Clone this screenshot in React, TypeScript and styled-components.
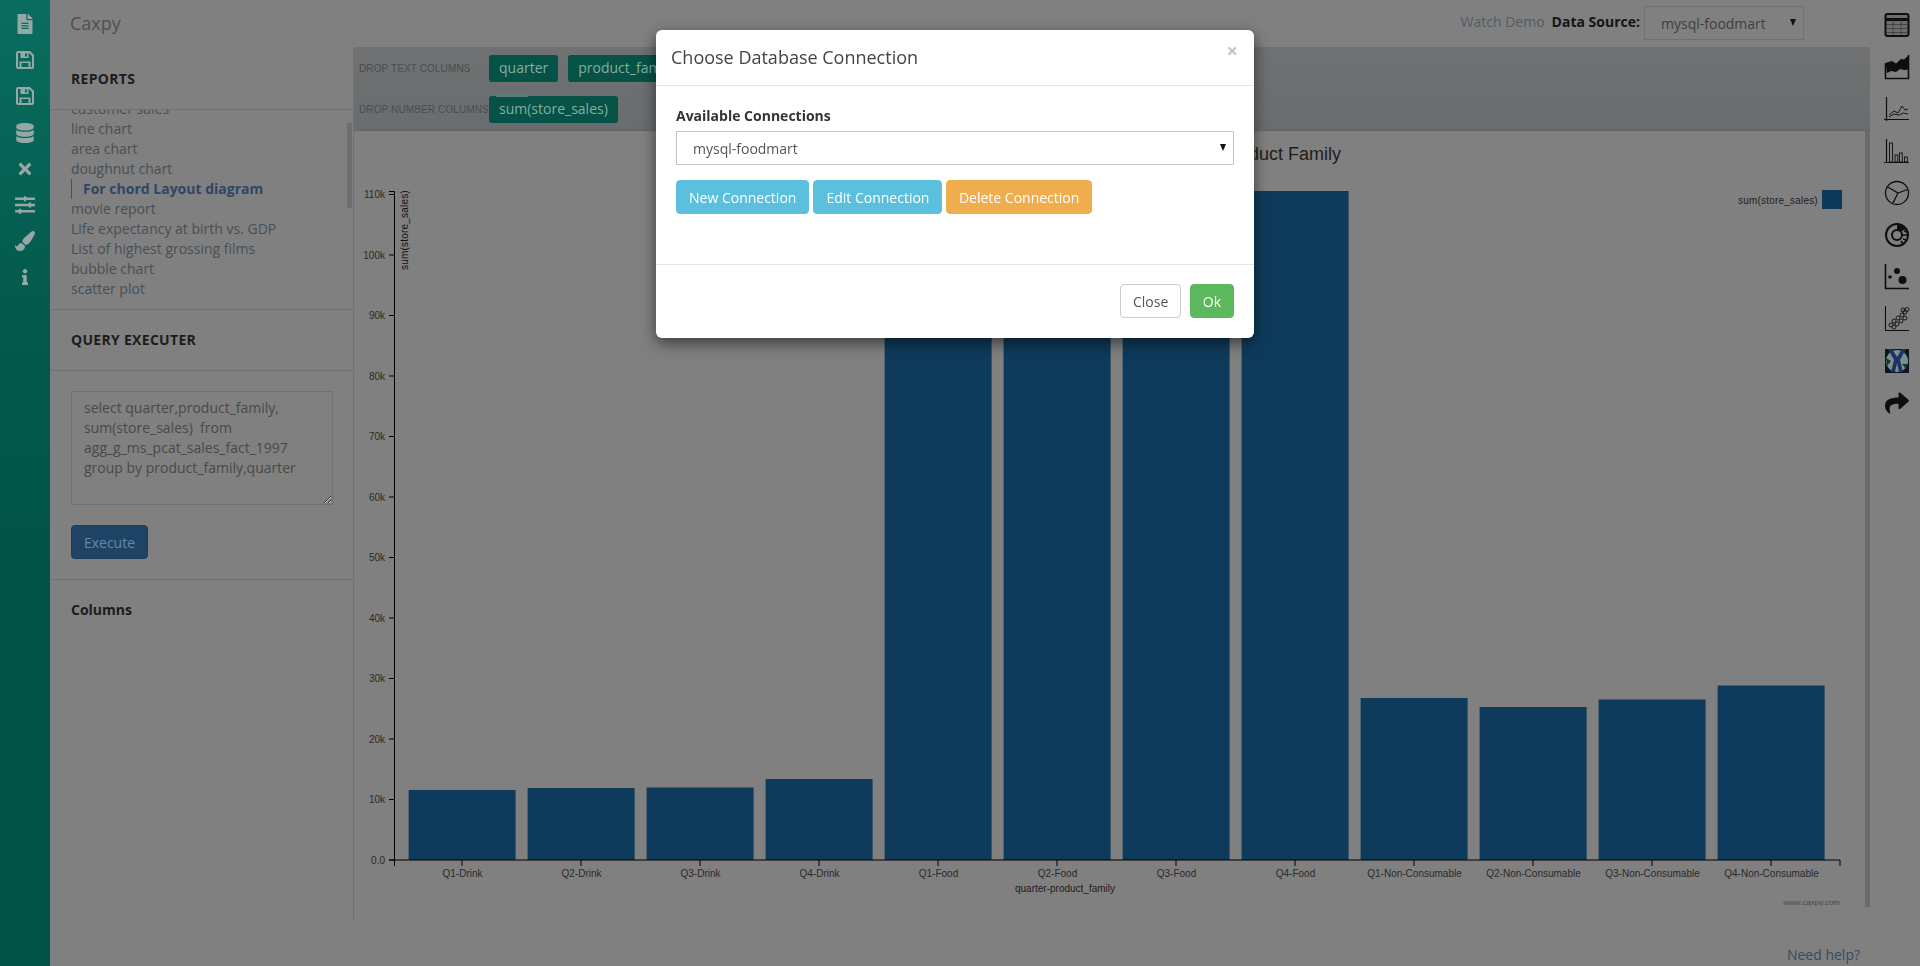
import React from 'react';
import styled, { createGlobalStyle } from 'styled-components';
import { FaFileAlt, FaDatabase, FaTimes, FaSlidersH, FaPaintBrush, FaInfo, FaShare } from 'react-icons/fa';

const Global = createGlobalStyle`
  html, body { margin: 0; padding: 0; background: #808080; overflow: hidden; }
  body { font-family: "Open Sans", "Liberation Sans", sans-serif; font-size: 14px; color: #4c4f52; }
  * { box-sizing: border-box; }
`;

const Page = styled.div`
  display: flex;
  width: 1920px;
  height: 966px;
  background: #808080;
`;

const LeftRail = styled.nav`
  width: 50px;
  flex: none;
  padding-top: 6px;
  display: flex;
  flex-direction: column;
  align-items: center;
  background: linear-gradient(180deg, #096d5f 0, #045a4d 300px, #005146 620px);
`;

const RailIcon = styled.div`
  width: 50px;
  height: 36.2px;
  flex: none;
  display: flex;
  align-items: center;
  justify-content: center;
  color: #96a8a5;
  font-size: ${(p: { $size?: number }) => p.$size ?? 20}px;
`;

const Center = styled.div`
  flex: 1;
  min-width: 0;
  display: flex;
  flex-direction: column;
`;

const TopBar = styled.header`
  height: 47px;
  flex: none;
  display: flex;
  align-items: center;
  justify-content: space-between;
  padding: 0 66px 0 20px;
`;

const Brand = styled.div`
  font-size: 18px;
  line-height: 24px;
  margin-top: -2px;
  color: #4f5051;
`;

const TopRight = styled.div`
  display: flex;
  align-items: center;
  padding-bottom: 1px;
`;

const DemoLink = styled.a`
  color: #525c68;
  font-size: 14px;
  margin-right: 7px;
  margin-top: -3px;
`;

const SourceLabel = styled.span`
  color: #141414;
  font-weight: 700;
  font-size: 14px;
  margin-right: 4px;
  margin-top: -3px;
`;

const FakeSelect = styled.div`
  position: relative;
  height: 34px;
  width: ${(p: { $light?: boolean }) => (p.$light ? '100%' : '160px')};
  padding: 7px 16px;
  line-height: 20px;
  border: 1px solid ${(p: { $light?: boolean }) => (p.$light ? '#c4c4c4' : '#707070')};
  color: ${(p: { $light?: boolean }) => (p.$light ? '#555' : '#3f3f3f')};
  background: ${(p: { $light?: boolean }) => (p.$light ? '#fff' : '#808080')};
  &::after {
    content: '';
    position: absolute;
    right: 7px;
    top: 12px;
    border-left: 3.5px solid transparent;
    border-right: 3.5px solid transparent;
    border-top: 7px solid #111;
  }
`;

const Body = styled.div`
  height: 873px;
  flex: none;
  display: flex;
  align-items: flex-start;
`;

const Sidebar = styled.aside`
  width: 304px;
  flex: none;
  height: 871px;
  margin-top: 2px;
  padding-left: 1px;
  border-right: 1px solid #727272;
  background: #808080;
  display: flex;
  flex-direction: column;
`;

const SectionHead = styled.h3`
  height: 61px;
  margin: 0;
  flex: none;
  padding: 0 20px 2px;
  display: flex;
  align-items: center;
  font-size: 14px;
  font-weight: 700;
  letter-spacing: ${(p: { $caps?: boolean; $plain?: boolean }) => (p.$caps ? '0.3px' : '0')};
  color: #1c1c1c;
  border-bottom: ${(p: { $caps?: boolean; $plain?: boolean }) => (p.$plain ? 'none' : '1px solid #717171')};
`;

const ListWrap = styled.div`
  position: relative;
  height: 200px;
  flex: none;
  overflow: hidden;
  padding: 0 20px;
  border-bottom: 1px solid #717171;
`;

const ReportList = styled.ul`
  list-style: none;
  margin: -11px 0 0;
  padding: 0;
`;

const ReportItem = styled.li`
  height: 20px;
  line-height: 20px;
  white-space: nowrap;
  color: ${(p: { $active?: boolean }) => (p.$active ? '#2f4664' : '#484f56')};
  font-weight: ${(p: { $active?: boolean }) => (p.$active ? 700 : 400)};
  ${(p: { $active?: boolean }) => (p.$active ? 'border-left: 1px solid #4a4f55; padding-left: 11px;' : '')}
`;

const ScrollThumb = styled.div`
  position: absolute;
  right: 1px;
  top: 13px;
  width: 5px;
  height: 85px;
  background: #6f6f6f;
`;

const QueryBody = styled.div`
  flex: none;
  padding: 20px;
  border-bottom: 1px solid #717171;
`;

const QueryBox = styled.textarea`
  display: block;
  width: 262px;
  height: 114px;
  padding: 6px 12px;
  border: 1px solid #717171;
  border-radius: 1px;
  background: #808080;
  color: #494949;
  font: 14px/20px "Open Sans", "Liberation Sans", sans-serif;
  outline: none;
`;

const ExecuteButton = styled.button`
  display: block;
  margin-top: 20px;
  width: 77px;
  height: 34px;
  padding: 0;
  border: 1px solid #1b3b58;
  border-radius: 4px;
  background: #1f4365;
  color: #6288a8;
  font: 14px "Open Sans", "Liberation Sans", sans-serif;
`;

const Main = styled.main`
  flex: 1;
  min-width: 0;
  height: 859px;
  display: flex;
  flex-direction: column;
`;

const DropZone = styled.div`
  height: 84px;
  flex: none;
  padding: 8px 0 0 5px;
  display: flex;
  flex-direction: column;
  gap: 14px;
  background: linear-gradient(180deg, #6f7172, #6a6d6f);
  border-bottom: 1px solid #626465;
`;

const DropRow = styled.div`
  display: flex;
  align-items: center;
  height: 27px;
`;

const DropLabel = styled.span`
  width: 130px;
  flex: none;
  font: 10px "Liberation Sans", Arial, sans-serif;
  letter-spacing: 0.12px;
  color: #4a4d4f;
  text-transform: uppercase;
`;

const Chip = styled.span`
  position: relative;
  height: 27px;
  padding: 0 10px;
  margin-right: 10px;
  line-height: 26px;
  border-radius: 3px;
  background: #065246;
  color: #85aea4;
  font-size: 14px;
  white-space: nowrap;
`;

const ChipGhost = styled.i`
  position: absolute;
  left: 7px;
  top: -3px;
  width: 32px;
  height: 4px;
  border-radius: 2px 2px 0 0;
  background: #5c7d77;
`;

const ChartPane = styled.div`
  height: 776px;
  flex: none;
  background: #808080;
  border-right: 5px solid #6a6a6a;
  overflow: hidden;
`;

const ChartSvg = styled.svg`
  display: block;
  width: 1511px;
  height: 775px;
  font-family: "Liberation Sans", Arial, sans-serif;
`;

const Footer = styled.footer`
  flex: 1;
  display: flex;
  justify-content: flex-end;
  align-items: flex-start;
  padding: 25px 10px 0 0;
`;

const HelpLink = styled.a`
  color: #384a5e;
  font-size: 14px;
  line-height: 20px;
`;

const RightRail = styled.aside`
  width: 50px;
  flex: none;
  padding-top: 4px;
  display: flex;
  flex-direction: column;
  background: #808080;
`;

const ChartIcon = styled.div`
  height: 42px;
  flex: none;
  display: flex;
  align-items: center;
  justify-content: center;
  padding-left: 4px;
  color: #0e0e0e;
`;

const Modal = styled.div`
  position: fixed;
  left: 656px;
  top: 30px;
  width: 598px;
  height: 308px;
  background: #fff;
  border-radius: 6px;
  box-shadow: 0 5px 15px rgba(0, 0, 0, 0.55);
  display: flex;
  flex-direction: column;
  z-index: 10;
`;

const ModalHeader = styled.div`
  height: 56px;
  flex: none;
  display: flex;
  align-items: center;
  justify-content: space-between;
  padding: 0 15px 2px 15px;
  border-bottom: 1px solid #e5e5e5;
`;

const ModalTitle = styled.h4`
  margin: 0;
  font-size: 18px;
  font-weight: 400;
  color: #444;
`;

const CloseX = styled.span`
  margin: -12px 0 0;
  padding-right: 1px;
  font-size: 20px;
  font-weight: 700;
  line-height: 1;
  color: #c4c4c4;
`;

const ModalBody = styled.div`
  height: 179px;
  flex: none;
  padding: 20px 20px 0;
  border-bottom: 1px solid #e5e5e5;
`;

const FieldLabel = styled.label`
  display: block;
  height: 20px;
  line-height: 20px;
  margin-bottom: 5px;
  font-size: 14px;
  font-weight: 700;
  color: #333;
`;

const ButtonRow = styled.div`
  display: flex;
  gap: 4px;
  margin-top: 15px;
`;

const Btn = styled.button`
  height: 34px;
  padding: 0 ${(p: { $kind: string }) => (p.$kind === 'info' || p.$kind === 'success' ? '12px' : '11.5px')};
  border: 1px solid
    ${(p: { $kind: string }) =>
      ({ info: '#5bbfdd', warning: '#f0ad4e', success: '#5cb85c', default: '#ccc' } as Record<string, string>)[p.$kind]};
  border-radius: 4px;
  background: ${(p: { $kind: string }) =>
    ({ info: '#5bc0de', warning: '#f0ad4e', success: '#5cb85c', default: '#fff' } as Record<string, string>)[p.$kind]};
  color: ${(p: { $kind: string }) => (p.$kind === 'default' ? '#555' : '#fff')};
  font: 14px "Open Sans", "Liberation Sans", sans-serif;
  white-space: nowrap;
`;

const ModalFooter = styled.div`
  flex: 1;
  display: flex;
  justify-content: flex-end;
  gap: 9px;
  padding: 19px 20px 0;
`;

const reports = [
  'customer sales',
  'line chart',
  'area chart',
  'doughnut chart',
  'For chord Layout diagram',
  'movie report',
  'Life expectancy at birth vs. GDP',
  'List of highest grossing films',
  'bubble chart',
  'scatter plot',
];

const bars = [
  { label: 'Q1-Drink', top: 790 },
  { label: 'Q2-Drink', top: 788 },
  { label: 'Q3-Drink', top: 787.5 },
  { label: 'Q4-Drink', top: 779 },
  { label: 'Q1-Food', top: 230 },
  { label: 'Q2-Food', top: 226 },
  { label: 'Q3-Food', top: 228 },
  { label: 'Q4-Food', top: 191 },
  { label: 'Q1-Non-Consumable', top: 698 },
  { label: 'Q2-Non-Consumable', top: 707 },
  { label: 'Q3-Non-Consumable', top: 699.5 },
  { label: 'Q4-Non-Consumable', top: 685.5 },
];

const yTicks = ['0.0', '10k', '20k', '30k', '40k', '50k', '60k', '70k', '80k', '90k', '100k', '110k'];

const Chart = () => (
  <ChartSvg viewBox="354 131 1511 775">
    <text x="1341" y="160" textAnchor="end" fontSize="18" fill="#1d1d1d">Sum of Sales by Quarter Product Family</text>
    {bars.map((b, i) => (
      <rect key={b.label} x={408.6 + 119 * i} y={b.top} width={107} height={860 - b.top} fill="#0e3b5c" />
    ))}
    <path d="M389 191.5H394.5V860H389M394.5 866V860H1840V866" fill="none" stroke="#000" />
    {yTicks.map((t, i) => {
      const y = 860 - 60.5 * i;
      return (
        <g key={t}>
          <line x1="389" x2="394.5" y1={y} y2={y} stroke="#000" />
          <text x="385" y={y + 3.5} textAnchor="end" fontSize="10" fill="#2a2a2a">{t}</text>
        </g>
      );
    })}
    {bars.map((b, i) => {
      const cx = 462 + 119 * i;
      return (
        <g key={b.label}>
          <line x1={cx} x2={cx} y1="860" y2="866" stroke="#000" />
          <text x={cx + 0.5} y="876.5" textAnchor="middle" fontSize="10" fill="#2a2a2a">{b.label}</text>
        </g>
      );
    })}
    <text x="1065" y="892" textAnchor="middle" fontSize="10" fill="#1d1d1d">quarter-product_family</text>
    <text transform="translate(408 270) rotate(-90)" fontSize="10" letterSpacing="0.2" fill="#111">sum(store_sales)</text>
    <text x="1738" y="204" fontSize="10" letterSpacing="0.2" fill="#222">sum(store_sales)</text>
    <rect x="1822" y="190" width="20" height="19" fill="#0d3a5a" />
    <text x="1840" y="905" textAnchor="end" fontSize="8" fill="#4a4a4a">www.caxpy.com</text>
  </ChartSvg>
);

const Svg = ({ children }: { children: React.ReactNode }) => (
  <svg width="26" height="26" viewBox="0 0 26 26" fill="none" stroke="currentColor">{children}</svg>
);

const FloppyIcon = () => (
  <svg width="18" height="18" viewBox="0 0 18 18">
    <path
      fillRule="evenodd"
      fill="currentColor"
      d="M2 0h12l4 4v12a2 2 0 0 1-2 2H2a2 2 0 0 1-2-2V2a2 2 0 0 1 2-2zM2 2v14h1.5v-5.5h11V16H16V5l-3-3h-.5v5h-8V2zM5.5 12v4h7v-4zM9 2.5v3h2v-3z"
    />
  </svg>
);

const chartIcons: React.ReactNode[] = [
  <Svg key="table">
    <rect x="1.5" y="2" width="23" height="22" rx="2" fill="#6e6e6e" stroke="#0e0e0e" strokeWidth="2" />
    <path d="M1 7.5H25" stroke="#0e0e0e" strokeWidth="3" />
    <path d="M2 12.5H24M2 16.5H24M2 20.5H24M9 8V23M17 8V23" stroke="#3a3a3a" strokeWidth="0.8" />
  </Svg>,
  <Svg key="area">
    <path d="M1.5 9 8 7l4 2.5 5-4.5 3 .5 4.5-4v14l-4.5 .5-4-1-4 3-5-1-4 2z" fill="#0e0e0e" stroke="none" />
    <path d="M1.5 9v15.5h23V1" strokeWidth="1.6" />
  </Svg>,
  <Svg key="line">
    <path d="M2.5 1v24M0 23.5h25" strokeWidth="1.2" />
    <path d="M5 19l5-4 4 2 4-7 3 4 3-1M5 21l5-3 5 1 4-2 5 1" strokeWidth="0.9" />
  </Svg>,
  <Svg key="bar">
    <path d="M2.5 1v24M0 24.5h25" strokeWidth="1.2" />
    <rect x="5.5" y="5" width="3" height="19" strokeWidth="0.9" />
    <rect x="11" y="17" width="2.8" height="7" strokeWidth="0.9" />
    <rect x="15.5" y="15" width="2.8" height="9" strokeWidth="0.9" />
    <rect x="20.5" y="19" width="2.8" height="5" strokeWidth="0.9" />
  </Svg>,
  <Svg key="pie">
    <circle cx="13" cy="13" r="11.5" strokeWidth="1.3" />
    <path d="M3 6.5l11 6.5 9.5-3.5M14 13l-5 10" strokeWidth="1.3" />
  </Svg>,
  <Svg key="donut">
    <circle cx="13" cy="13" r="11" strokeWidth="2" />
    <circle cx="13" cy="13" r="5" strokeWidth="2" />
    <path d="M13 2a11 11 0 0 1 9 5l-6 3a5 5 0 0 0-3-2z" fill="#0e0e0e" stroke="none" />
    <path d="M20 9l3 1M19 13h4M19 17l3 1M17 19l2 3" strokeWidth="1.6" />
  </Svg>,
  <Svg key="bubble">
    <path d="M1.5 0v24.5H25" strokeWidth="1.6" />
    <circle cx="13" cy="7" r="3" fill="#0e0e0e" stroke="none" />
    <circle cx="6" cy="13" r="1.8" fill="#0e0e0e" stroke="none" />
    <circle cx="18.5" cy="16" r="4" fill="#0e0e0e" stroke="none" />
  </Svg>,
  <Svg key="scatter">
    <path d="M1.5 0v24.5H25" strokeWidth="1.1" />
    <g strokeWidth="0.9">
      <circle cx="7" cy="19" r="2" /><circle cx="10" cy="21" r="2" /><circle cx="10" cy="15" r="2" />
      <circle cx="13" cy="18" r="2" /><circle cx="14" cy="12" r="2" /><circle cx="17" cy="15" r="2" />
      <circle cx="18" cy="9" r="2" /><circle cx="21" cy="12" r="2" /><circle cx="21" cy="6" r="2" />
      <circle cx="23" cy="3.5" r="2" /><circle cx="19" cy="4" r="2" />
    </g>
  </Svg>,
  <Svg key="chord">
    <rect x="1" y="1" width="24" height="24" fill="#0b1622" stroke="none" />
    <circle cx="13" cy="13" r="11" fill="#7f8e8c" stroke="none" />
    <path d="M8 1l5 8 5-8h4l-6 11 3 12h-4l-2-9-2 9H7l3-12L4 1z" fill="#1b3366" stroke="none" />
    <path d="M2 10l5 3-4 5zM24 16l-6 0 4 5z" fill="#143a24" stroke="none" />
  </Svg>,
];

export default function App() {
  return (
    <>
      <Global />
      <Page>
        <LeftRail>
          <RailIcon $size={20}><FaFileAlt /></RailIcon>
          <RailIcon><FloppyIcon /></RailIcon>
          <RailIcon><FloppyIcon /></RailIcon>
          <RailIcon><FaDatabase /></RailIcon>
          <RailIcon $size={18}><FaTimes /></RailIcon>
          <RailIcon><FaSlidersH /></RailIcon>
          <RailIcon><FaPaintBrush /></RailIcon>
          <RailIcon $size={16}><FaInfo /></RailIcon>
        </LeftRail>
        <Center>
          <TopBar>
            <Brand>Caxpy</Brand>
            <TopRight>
              <DemoLink>Watch Demo</DemoLink>
              <SourceLabel>Data Source:</SourceLabel>
              <FakeSelect>mysql-foodmart</FakeSelect>
            </TopRight>
          </TopBar>
          <Body>
            <Sidebar>
              <SectionHead $caps>REPORTS</SectionHead>
              <ListWrap>
                <ReportList>
                  {reports.map((r, i) => (
                    <ReportItem key={r} $active={i === 4}>{r}</ReportItem>
                  ))}
                </ReportList>
                <ScrollThumb />
              </ListWrap>
              <SectionHead $caps>QUERY EXECUTER</SectionHead>
              <QueryBody>
                <QueryBox
                  readOnly
                  defaultValue={'select quarter,product_family, sum(store_sales)  from agg_g_ms_pcat_sales_fact_1997 group by product_family,quarter'}
                />
                <ExecuteButton>Execute</ExecuteButton>
              </QueryBody>
              <SectionHead $plain>Columns</SectionHead>
            </Sidebar>
            <Main>
              <DropZone>
                <DropRow>
                  <DropLabel>Drop text columns</DropLabel>
                  <Chip>quarter</Chip>
                  <Chip>product_family</Chip>
                </DropRow>
                <DropRow>
                  <DropLabel>Drop number columns</DropLabel>
                  <Chip><ChipGhost />sum(store_sales)</Chip>
                </DropRow>
              </DropZone>
              <ChartPane><Chart /></ChartPane>
            </Main>
          </Body>
          <Footer><HelpLink>Need help?</HelpLink></Footer>
        </Center>
        <RightRail>
          {chartIcons.map((icon, i) => <ChartIcon key={i}>{icon}</ChartIcon>)}
          <ChartIcon><FaShare size={24} /></ChartIcon>
        </RightRail>
      </Page>
      <Modal>
        <ModalHeader>
          <ModalTitle>Choose Database Connection</ModalTitle>
          <CloseX>×</CloseX>
        </ModalHeader>
        <ModalBody>
          <FieldLabel>Available Connections</FieldLabel>
          <FakeSelect $light>mysql-foodmart</FakeSelect>
          <ButtonRow>
            <Btn $kind="info">New Connection</Btn>
            <Btn $kind="info">Edit Connection</Btn>
            <Btn $kind="warning">Delete Connection</Btn>
          </ButtonRow>
        </ModalBody>
        <ModalFooter>
          <Btn $kind="default">Close</Btn>
          <Btn $kind="success">Ok</Btn>
        </ModalFooter>
      </Modal>
    </>
  );
}
